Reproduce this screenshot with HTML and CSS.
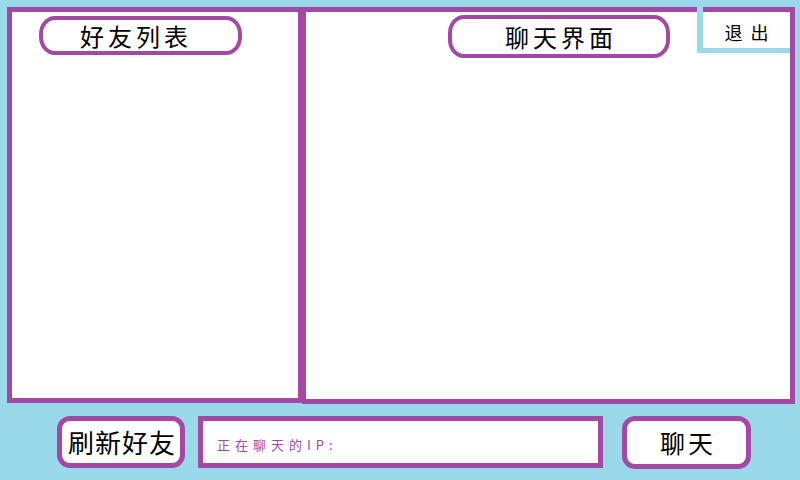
FILE: index.html
```html
<!DOCTYPE html>
<html lang="zh">
<head>
<meta charset="utf-8">
<title>聊天</title>
<link rel="stylesheet" href="styles.css">
</head>
<body>
<div class="app">
  <div class="top">
    <section class="panel friends">
      <div class="pill pill-friends">好友列表</div>
    </section>
    <section class="panel chat">
      <div class="pill pill-chat">聊天界面</div>
    </section>
  </div>
  <div class="bottom">
    <div class="btn btn-refresh">刷新好友</div>
    <div class="ipbox">正在聊天的IP:</div>
    <div class="btn btn-chat">聊天</div>
  </div>
  <div class="exit">退出</div>
</div>
</body>
</html>
```
FILE: styles.css
```css
html, body {
  margin: 0;
  padding: 0;
}
body {
  width: 800px;
  height: 480px;
  background: #99d9ea;
  font-family: "Noto Sans CJK SC", "Noto Sans", sans-serif;
  color: #000;
  overflow: hidden;
}
.app {
  position: relative;
  width: 800px;
  height: 480px;
  padding-top: 7px;
  box-sizing: border-box;
}
.top {
  display: flex;
  padding-left: 7px;
}
.panel {
  background: #fff;
  border: 5px solid #a349a4;
  box-sizing: border-box;
}
.friends {
  width: 295px;
  height: 396px;
  border-right-width: 4px;
}
.chat {
  width: 493px;
  height: 397px;
  border-left-width: 4px;
}
.pill {
  box-sizing: border-box;
  border: 4px solid #a349a4;
  border-radius: 16px / 18px;
  display: flex;
  align-items: center;
  justify-content: center;
  font-size: 24px;
  line-height: 1;
  letter-spacing: 4px;
}
.pill-friends {
  width: 203px;
  height: 39px;
  margin: 4px 0 0 27px;
  padding-right: 9px;
}
.pill-chat {
  width: 222px;
  height: 43px;
  margin: 3px 0 0 142px;
  padding-left: 4px;
}
.bottom {
  display: flex;
  align-items: flex-start;
  margin-top: 12px;
  padding-left: 57px;
}
.btn {
  box-sizing: border-box;
  background: #fff;
  border: 5px solid #a349a4;
  border-radius: 13px;
  display: flex;
  align-items: center;
  justify-content: center;
  line-height: 1;
}
.btn-refresh {
  width: 128px;
  height: 52px;
  font-size: 26px;
  letter-spacing: 1px;
  padding-left: 2px;
}
.ipbox {
  box-sizing: border-box;
  width: 405px;
  height: 52px;
  margin-left: 13px;
  background: #fff;
  border: 5px solid #a349a4;
  display: flex;
  align-items: center;
  padding: 4px 0 0 14px;
  font-size: 13px;
  letter-spacing: 5px;
  color: #a349a4;
  line-height: 1;
}
.btn-chat {
  width: 129px;
  height: 53px;
  margin-left: 19px;
  font-size: 25px;
  letter-spacing: 3px;
  padding-left: 3px;
}
.exit {
  position: absolute;
  left: 697px;
  top: 12px;
  width: 93px;
  height: 41px;
  box-sizing: border-box;
  background: #fff;
  border-left: 6px solid #99d9ea;
  border-bottom: 5px solid #99d9ea;
  display: flex;
  align-items: center;
  justify-content: center;
  padding: 3px 0 0 8px;
  font-size: 18px;
  letter-spacing: 8px;
  line-height: 1;
}
.exit::before {
  content: "";
  position: absolute;
  left: -6px;
  top: -7px;
  width: 6px;
  height: 7px;
  background: #99d9ea;
}
```
